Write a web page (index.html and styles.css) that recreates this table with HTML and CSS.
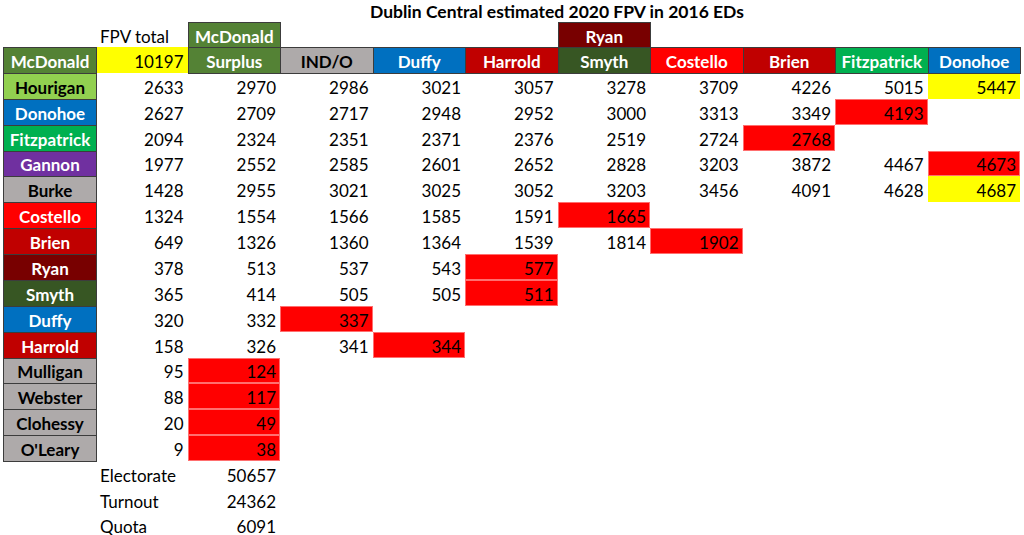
FILE: index.html
```html
<!DOCTYPE html>
<html lang="en">
<head>
<meta charset="utf-8">
<title>Dublin Central estimated 2020 FPV in 2016 EDs</title>
<link rel="stylesheet" href="styles.css">
</head>
<body>
<div class="sheet">
  <div class="title">Dublin Central estimated 2020 FPV in 2016 EDs</div>

  <div></div><div class="c lbl">FPV total</div><div class="c h green">McDonald</div><div></div><div></div><div></div><div class="c h maroon">Ryan</div><div></div><div></div><div></div><div></div>

  <div class="c h green">McDonald</div><div class="c num yellow">10197</div><div class="c h green">Surplus</div><div class="c h grey">IND/O</div><div class="c h blue">Duffy</div><div class="c h dred">Harrold</div><div class="c h dgreen">Smyth</div><div class="c h red">Costello</div><div class="c h dred">Brien</div><div class="c h fgreen">Fitzpatrick</div><div class="c h blue">Donohoe</div>

  <div class="c h lgreen">Hourigan</div><div class="c num">2633</div><div class="c num">2970</div><div class="c num">2986</div><div class="c num">3021</div><div class="c num">3057</div><div class="c num">3278</div><div class="c num">3709</div><div class="c num">4226</div><div class="c num">5015</div><div class="c num yellow">5447</div>

  <div class="c h blue">Donohoe</div><div class="c num">2627</div><div class="c num">2709</div><div class="c num">2717</div><div class="c num">2948</div><div class="c num">2952</div><div class="c num">3000</div><div class="c num">3313</div><div class="c num">3349</div><div class="c num hot">4193</div><div></div>

  <div class="c h fgreen">Fitzpatrick</div><div class="c num">2094</div><div class="c num">2324</div><div class="c num">2351</div><div class="c num">2371</div><div class="c num">2376</div><div class="c num">2519</div><div class="c num">2724</div><div class="c num hot">2768</div><div></div><div></div>

  <div class="c h purple">Gannon</div><div class="c num">1977</div><div class="c num">2552</div><div class="c num">2585</div><div class="c num">2601</div><div class="c num">2652</div><div class="c num">2828</div><div class="c num">3203</div><div class="c num">3872</div><div class="c num">4467</div><div class="c num hot">4673</div>

  <div class="c h grey">Burke</div><div class="c num">1428</div><div class="c num">2955</div><div class="c num">3021</div><div class="c num">3025</div><div class="c num">3052</div><div class="c num">3203</div><div class="c num">3456</div><div class="c num">4091</div><div class="c num">4628</div><div class="c num yellow">4687</div>

  <div class="c h red">Costello</div><div class="c num">1324</div><div class="c num">1554</div><div class="c num">1566</div><div class="c num">1585</div><div class="c num">1591</div><div class="c num hot">1665</div><div></div><div></div><div></div><div></div>

  <div class="c h dred">Brien</div><div class="c num">649</div><div class="c num">1326</div><div class="c num">1360</div><div class="c num">1364</div><div class="c num">1539</div><div class="c num">1814</div><div class="c num hot">1902</div><div></div><div></div><div></div>

  <div class="c h maroon">Ryan</div><div class="c num">378</div><div class="c num">513</div><div class="c num">537</div><div class="c num">543</div><div class="c num hot">577</div><div></div><div></div><div></div><div></div><div></div>

  <div class="c h dgreen">Smyth</div><div class="c num">365</div><div class="c num">414</div><div class="c num">505</div><div class="c num">505</div><div class="c num hot">511</div><div></div><div></div><div></div><div></div><div></div>

  <div class="c h blue">Duffy</div><div class="c num">320</div><div class="c num">332</div><div class="c num hot">337</div><div></div><div></div><div></div><div></div><div></div><div></div><div></div>

  <div class="c h dred">Harrold</div><div class="c num">158</div><div class="c num">326</div><div class="c num">341</div><div class="c num hot">344</div><div></div><div></div><div></div><div></div><div></div><div></div>

  <div class="c h grey">Mulligan</div><div class="c num">95</div><div class="c num hot">124</div><div></div><div></div><div></div><div></div><div></div><div></div><div></div><div></div>

  <div class="c h grey">Webster</div><div class="c num">88</div><div class="c num hot">117</div><div></div><div></div><div></div><div></div><div></div><div></div><div></div><div></div>

  <div class="c h grey">Clohessy</div><div class="c num">20</div><div class="c num hot">49</div><div></div><div></div><div></div><div></div><div></div><div></div><div></div><div></div>

  <div class="c h grey">O'Leary</div><div class="c num">9</div><div class="c num hot">38</div><div></div><div></div><div></div><div></div><div></div><div></div><div></div><div></div>

  <div></div><div class="c lbl">Electorate</div><div class="c num">50657</div><div></div><div></div><div></div><div></div><div></div><div></div><div></div><div></div>

  <div></div><div class="c lbl">Turnout</div><div class="c num">24362</div><div></div><div></div><div></div><div></div><div></div><div></div><div></div><div></div>

  <div></div><div class="c lbl last">Quota</div><div class="c num last">6091</div><div></div><div></div><div></div><div></div><div></div><div></div><div></div><div></div>
</div>
</body>
</html>
```

FILE: styles.css
```css
html, body {
  margin: 0;
  padding: 0;
  background: #ffffff;
}

body {
  width: 1024px;
  height: 535px;
  overflow: hidden;
  font-family: Lato, "Open Sans", "Liberation Sans", sans-serif;
  font-size: 17px;
  color: #000000;
}

.sheet {
  display: grid;
  grid-template-columns: 93px 91.5px repeat(9, 92.5px);
  grid-template-rows: 22px 25px repeat(18, 25.875px) 22px;
  padding-left: 3px;
}

.title {
  grid-column: 1 / -1;
  text-align: center;
  font-weight: 700;
  font-size: 17.5px;
  padding-left: 91px;
  padding-top: 1px;
  line-height: 22px;
  white-space: nowrap;
}

.c {
  display: flex;
  align-items: center;
  padding: 3px 4px 0 4px;
  white-space: nowrap;
  min-width: 0;
}

.c.last {
  align-items: flex-start;
  line-height: 19px;
  padding-top: 4px;
}

.num {
  justify-content: flex-end;
}

.lbl {
  justify-content: flex-start;
  padding-left: 4px;
}

.h {
  justify-content: center;
  font-weight: 700;
  color: #ffffff;
  border: 1px solid #3c3c3c;
  margin: 0 -1px -1px 0;
  padding: 2px 0 0 0;
  position: relative;
}

.green { background: #548235; }
.lgreen { background: #92d050; color: #000000; }
.fgreen { background: #00b050; }
.dgreen { background: #375623; }
.blue { background: #0070c0; }
.red { background: #ff0000; }
.dred { background: #c00000; }
.maroon { background: #780000; }
.purple { background: #7030a0; }
.grey { background: #aeaaaa; color: #000000; }

.yellow {
  background: #ffff00;
}

.hot {
  background: #ff0000;
  box-shadow: inset 0 0 0 1px #ff6f6f;
}
```
